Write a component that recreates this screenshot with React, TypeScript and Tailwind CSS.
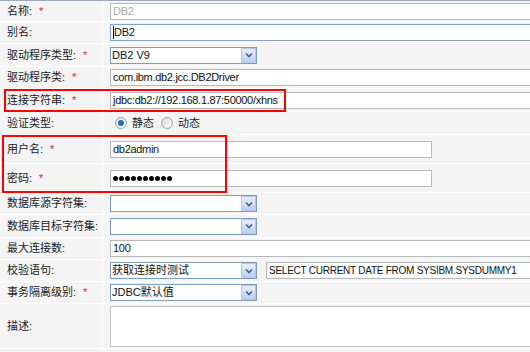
import React from 'react';

const labelFont = { fontFamily: '"Liberation Sans", "Noto Sans CJK SC", sans-serif' };

const Star = () => <span className="text-[#e0262b] ml-[4px]">*</span>;

const Row: React.FC<{ label: string; required?: boolean; h: string; children?: React.ReactNode }> = ({ label, required, h, children }) => (
  <div className={`flex border-b border-white ${h}`}>
    <div className="w-[103px] shrink-0 border-r border-white flex items-center pl-[7px] text-[11px] text-[#222] whitespace-nowrap overflow-hidden">
      {label}
      <span className="w-[6px]">:</span>
      {required && <Star />}
    </div>
    <div className="flex-1 min-w-0 flex items-center pl-[7px] overflow-hidden">{children}</div>
  </div>
);

const TextBox: React.FC<{ value?: string; w?: string; muted?: boolean; focused?: boolean; text?: string }> = ({
  value,
  w = 'w-[440px]',
  muted,
  focused,
  text = 'text-[11px] tracking-[-0.3px]',
}) => (
  <div
    className={`${w} shrink-0 h-[17px] bg-white border flex items-center pl-[2px] ${text} whitespace-nowrap ${
      focused ? 'border-[#7da2ce]' : 'border-[#b5b9be]'
    } ${muted ? 'text-[#a8a8a8]' : 'text-[#111]'}`}
  >
    {focused && <span className="w-px h-[13px] bg-black" />}
    {value}
  </div>
);

const Select: React.FC<{ value?: string }> = ({ value }) => (
  <div className="w-[147px] shrink-0 h-[17px] bg-white border border-[#7f9db9] flex items-center text-[11px] text-[#111]">
    <span className="flex-1 pl-[1px] whitespace-nowrap overflow-hidden">{value}</span>
    <span className="w-[15px] h-[15px] border border-[#b4c6ea] bg-gradient-to-b from-[#e6eefc] to-[#bccff2] flex items-center justify-center">
      <svg width="8" height="6" viewBox="0 0 8 6">
        <path d="M1 1.5 L4 4.5 L7 1.5" fill="none" stroke="#4d6185" strokeWidth="1.6" />
      </svg>
    </span>
  </div>
);

const Radio: React.FC<{ checked?: boolean; label: string }> = ({ checked, label }) => (
  <span className="flex items-center gap-[5px] mr-[7px]">
    <span className="w-[12px] h-[12px] rounded-full border border-[#9ba3ab] bg-gradient-to-br from-[#d8d8d8] to-white flex items-center justify-center">
      {checked && <span className="w-[6px] h-[6px] rounded-full bg-[#2d6db6]" />}
    </span>
    <span className="text-[11px] text-[#222]">{label}</span>
  </span>
);

const dots = Array.from({ length: 10 }, (_, i) => i);

export default function App() {
  return (
    <div className="w-[530px] h-[352px] overflow-hidden bg-[#f4f4f4] border-t border-[#98a9c0]" style={labelFont}>
      <Row label="名称" required h="h-[21px]">
        <TextBox value="DB2" muted />
      </Row>
      <Row label="别名" h="h-[22px]">
        <TextBox value="DB2" focused />
      </Row>
      <Row label="驱动程序类型" required h="h-[23px]">
        <Select value="DB2 V9" />
      </Row>
      <Row label="驱动程序类" required h="h-[22px]">
        <TextBox value="com.ibm.db2.jcc.DB2Driver" />
      </Row>
      <div className="relative">
        <Row label="连接字符串" required h="h-[23px]">
          <TextBox value="jdbc:db2://192.168.1.87:50000/xhns" />
        </Row>
        <div className="absolute left-[4px] top-0 w-[282px] h-[23px] border-2 border-[#ff0000]" />
      </div>
      <Row label="验证类型" h="h-[23px]">
        <span className="pl-[5px] flex items-center">
          <Radio checked label="静态" />
          <Radio label="动态" />
        </span>
      </Row>
      <div className="relative">
        <Row label="用户名" required h="h-[29px]">
          <TextBox value="db2admin" w="w-[322px]" />
        </Row>
        <Row label="密码" required h="h-[29px]">
          <div className="w-[322px] shrink-0 h-[17px] bg-white border border-[#b5b9be] flex items-center gap-[1px] pl-[2px]">
            {dots.map(i => (
              <span key={i} className="w-[5px] h-[5px] rounded-full bg-black" />
            ))}
          </div>
        </Row>
        <div className="absolute left-[2px] top-0 w-[225px] h-[58px] border-2 border-[#ff0000]" />
      </div>
      <Row label="数据库源字符集" h="h-[22px]">
        <Select />
      </Row>
      <Row label="数据库目标字符集" h="h-[23px]">
        <Select />
      </Row>
      <Row label="最大连接数" h="h-[22px]">
        <TextBox value="100" />
      </Row>
      <Row label="校验语句" h="h-[22px]">
        <Select value="获取连接时测试" />
        <div className="ml-[9px]">
          <TextBox
            value="SELECT CURRENT DATE FROM SYSIBM.SYSDUMMY1"
            w="w-[280px]"
            text="text-[10px] tracking-[-0.25px]"
          />
        </div>
      </Row>
      <Row label="事务隔离级别" required h="h-[22px]">
        <Select value="JDBC默认值" />
      </Row>
      <Row label="描述" h="h-[45px]">
        <div className="w-[440px] shrink-0 h-[41px] bg-white border border-[#c2c5c9]" />
      </Row>
    </div>
  );
}
